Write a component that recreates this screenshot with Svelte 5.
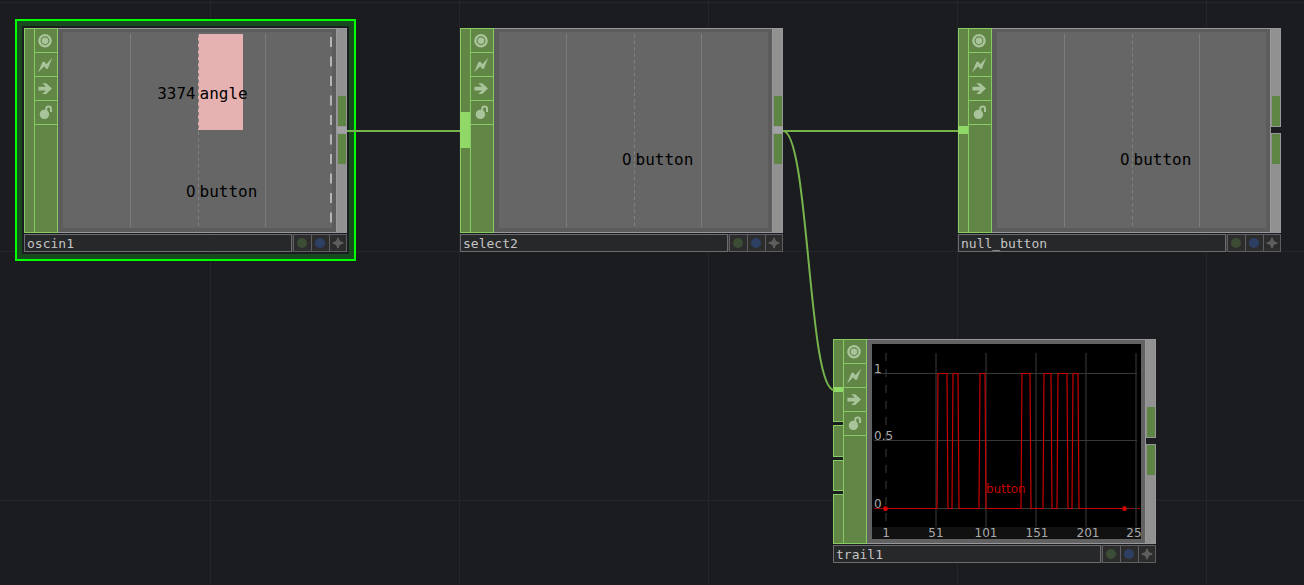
<script>
  const nodes = [
    { name: 'oscin1', x: 24, y: 28, selected: true, inputs: [{ grow: 1 }], joined: true, peak: true,
      channels: [{ value: '3374', label: 'angle', bar: 34 }, { value: '0', label: 'button', bar: 0 }] },
    { name: 'select2', x: 460, y: 28, inputs: [{ grow: 1, link: 'wide' }], joined: true,
      channels: [{ value: '0', label: 'button', bar: 0 }] },
    { name: 'null_button', x: 958, y: 28, inputs: [{ grow: 1, link: 'slim' }], joined: false,
      channels: [{ value: '0', label: 'button', bar: 0 }] },
    { name: 'trail1', x: 833, y: 339, joined: false, chart: true,
      inputs: [{ grow: 81, link: 'low' }, { grow: 30 }, { grow: 29 }, { grow: 48 }] }
  ];

  const wires = [
    'M347 131H460',
    'M783 131H958',
    'M783 131C809 131 808 390 834 390'
  ];

  const flags = ['Viewer', 'Clone immune', 'Bypass', 'Lock'];

  // Rising and falling edges of the button signal, in chart units.
  const pulses = [[65, 76], [80, 87], [107, 114], [149, 159], [171, 180], [185, 196], [200, 207]];
  const trace = 'M14 164' + pulses
    .map(([a, b]) => `H${a}L${a + 1} 29H${b - 1}L${b} 164`)
    .join('') + 'H252';
  const ticks = [[14, '1'], [64, '51'], [114, '101'], [165, '151'], [216, '201'], [262, '25']];
  const columns = [14, 64, 114, 164, 214, 264];
  const levels = [[29, '1'], [96, '0.5'], [164, '0']];
</script>

<main class="network">
  <svg class="wires" aria-hidden="true">
    {#each wires as d}<path {d} />{/each}
  </svg>

  {#each nodes as node}
    <section class="node" class:selected={node.selected} style="left:{node.x}px;top:{node.y}px">
      <div class="body">
        <div class="inputs">
          {#each node.inputs as input}
            <div class="input" style="flex-grow:{input.grow}">
              {#if input.link}<i class="link {input.link}"></i>{/if}
            </div>
          {/each}
        </div>

        <div class="flags">
          {#each flags as flag, i}
            <button class="flag" aria-label={flag}>
              <svg viewBox="0 0 22 23" width="22" height="23">
                {#if i === 0}
                  <circle cx="10" cy="11.7" r="5.6" fill="none" stroke="#a9c49b" stroke-width="2.4" />
                  <circle cx="10" cy="11.7" r="3.3" fill="#a9c49b" />
                {:else if i === 1}
                  <path fill="#a9c49b" d="M3 19.4L7.6 8.8H9.6L11.3 11.2L17.2 4.8L12.9 15.8H11L9.2 13.3Z" />
                {:else if i === 2}
                  <path fill="#a9c49b" d="M3.4 9.7H11L7.2 6.2H11.2L17 11.6L11.2 17H7.2L11 13.5H3.4Z" />
                {:else}
                  <circle cx="9.4" cy="13.4" r="4.7" fill="#a9c49b" />
                  <path fill="none" stroke="#a9c49b" stroke-width="2" d="M11.2 11V7.8Q11.2 5.4 13.6 5.4Q16 5.4 16 7.8V11" />
                {/if}
              </svg>
            </button>
          {/each}
        </div>

        <div class="frame" class:plot={node.chart}>
          {#if node.chart}
            <svg class="chart" viewBox="0 0 269 195" preserveAspectRatio="xMinYMin meet">
              <rect width="269" height="195" fill="#000" />
              <rect y="183" width="269" height="12" fill="#111" />
              {#each columns as x, i}
                <path d="M{x} 9V183" stroke="#1e1e1e" stroke-width="2" stroke-dasharray={i ? 'none' : '8 8'} />
              {/each}
              {#each ticks as [x, label]}
                <text class="tick" {x} y="193">{label}</text>
              {/each}
              {#each levels as [y, label]}
                <path d="M2 {y + 0.5}H265" stroke="#383838" />
                <text class="level" x="2" y={y}>{label}</text>
              {/each}
              <path d={trace} transform="translate(0 .5)" fill="none" stroke="#c80000" stroke-width="1.2" />
              <path d="M2 164.5H12M257 164.5H261M265 164.5H268" stroke="#a00000" />
              <circle cx="13.5" cy="164.7" r="2.4" fill="#d80000" />
              <circle cx="252.5" cy="164.7" r="2.4" fill="#d80000" />
              <text class="series" x="114" y="149">button</text>
            </svg>
          {:else}
            <div class="viewer">
              {#each node.channels as channel}
                <div class="channel">
                  {#if channel.bar}<i class="bar" style="width:{channel.bar / 2}%"></i>{/if}
                  <span class="value">{channel.value}</span>
                  <span class="label">{channel.label}</span>
                </div>
              {/each}
              <svg class="guides" viewBox="0 0 269 196" preserveAspectRatio="none" aria-hidden="true">
                <path d="M67.5 2V195M202.5 2V195" stroke="#7c7c7c" />
                <path d="M135.5 2V195" stroke="#808080" stroke-dasharray="3.5 3" />
                {#if node.peak}<path d="M268 5V196" stroke="#b4b4b4" stroke-width="2" stroke-dasharray="10 9.5" />{/if}
              </svg>
            </div>
          {/if}
        </div>

        <div class="outputs" class:joined={node.joined}>
          <div class="output upper"><i></i></div>
          <div class="output lower"><i></i></div>
        </div>
      </div>

      <footer class="title">
        <span class="name">{node.name}</span>
        <div class="toggles">
          <button aria-label="Display"><i class="dot green"></i></button>
          <button aria-label="Render"><i class="dot blue"></i></button>
          <button aria-label="Activate viewer">
            <svg viewBox="0 0 12 12" width="12" height="12">
              <path fill="#5d5d5d" d="M6 0L8 4L12 6L8 8L6 12L4 8L0 6L4 4Z" />
              <path stroke="#5d5d5d" stroke-width="2" d="M6 1V11M1 6H11" />
            </svg>
          </button>
        </div>
      </footer>
    </section>
  {/each}
</main>

<style>
  :global(body) {
    margin: 0;
    background: #1b1c20;
  }

  .network {
    position: relative;
    min-height: 100vh;
    overflow: hidden;
    background-color: #1b1c20;
    background-image:
      linear-gradient(90deg, #25262b 1px, transparent 1px),
      linear-gradient(#25262b 1px, transparent 1px);
    background-size: 249px 249px;
    background-position: 210px 2px;
    font-family: "DejaVu Sans Mono", monospace;
  }

  .network * {
    box-sizing: border-box;
  }

  .wires {
    position: absolute;
    inset: 0;
    width: 100%;
    height: 100%;
    z-index: 1;
    pointer-events: none;
  }

  .wires path {
    fill: none;
    stroke: #76b44b;
    stroke-width: 2;
  }

  .node {
    position: absolute;
    width: 323px;
  }

  .selected::before {
    content: "";
    position: absolute;
    inset: -9px;
    border: 2px solid #00ff00;
    box-shadow: inset 0 0 0 5px #174a1c;
  }

  .body {
    position: relative;
    display: grid;
    grid-template-columns: 10px 24px 1fr 11px;
    height: 205px;
  }

  .inputs {
    display: flex;
    flex-direction: column;
    gap: 3px;
  }

  .input {
    position: relative;
    flex-basis: 0;
    background: #618646;
    border: 1px solid #86cc62;
    border-right: 0;
  }

  .link {
    position: absolute;
    left: -1px;
    right: 0;
    background: #90d868;
  }

  .wide {
    top: 83px;
    height: 36px;
  }

  .slim {
    top: 97px;
    height: 8px;
  }

  .low {
    top: 47px;
    height: 5px;
  }

  .flags {
    background: #618646;
    border: 1px solid #86cc62;
  }

  .flag {
    display: block;
    width: 100%;
    height: 24px;
    padding: 0;
    border: 0;
    border-bottom: 1px solid #86cc62;
    background: none;
  }

  .flag svg {
    display: block;
  }

  .frame {
    padding: 3px 4px 4px 5px;
    background: #5c5c5c;
    border: solid #98989c;
    border-width: 1px 0;
  }

  .plot {
    padding-top: 4px;
    background: #626262;
  }

  .viewer {
    position: relative;
    display: flex;
    flex-direction: column;
    height: 100%;
    background: #666;
  }

  .channel {
    position: relative;
    flex: 1;
    display: grid;
    grid-template-columns: 1fr 1fr;
    grid-template-rows: 2fr auto 1fr;
    font-size: 16px;
    line-height: 18px;
    color: #000;
  }

  .bar {
    position: absolute;
    top: 2px;
    bottom: 0;
    left: 50%;
    background: #e5b1b1;
  }

  .value {
    position: relative;
    grid-row: 2;
    text-align: right;
    padding-right: 2px;
    font-family: "DejaVu Sans", sans-serif;
    font-size: 15px;
  }

  .label {
    position: relative;
    grid-row: 2;
    padding-left: 2px;
  }

  .guides {
    position: absolute;
    inset: 0;
    width: 100%;
    height: 100%;
  }

  .chart {
    display: block;
    width: 100%;
    font-family: "DejaVu Sans", sans-serif;
    font-size: 12px;
  }

  .tick {
    text-anchor: middle;
    fill: #aaa;
  }

  .level {
    fill: #aaa;
  }

  .series {
    fill: #c00000;
  }

  .outputs {
    display: flex;
    flex-direction: column;
    gap: 6px;
    border-left: 1px solid #98989c;
  }

  .output {
    display: flex;
    padding-left: 1px;
    background: #919191;
    border: 1px solid #98989c;
    border-left: 0;
  }

  .output i {
    width: 100%;
    height: 30px;
    background: #5f8545;
  }

  .upper {
    flex: 0 0 99px;
    align-items: flex-end;
  }

  .lower {
    flex: 1;
    align-items: flex-start;
  }

  .joined {
    background: #a1a1a6;
  }

  .title {
    position: relative;
    display: flex;
    gap: 1px;
    height: 18px;
    margin-top: 1px;
    background: #3c3c40;
  }

  .name {
    flex: 1;
    padding-left: 2px;
    border: 1px solid #6c6c70;
    background: #27282a;
    color: #c4c4c4;
    font-size: 13px;
    line-height: 17px;
  }

  .toggles {
    display: grid;
    grid-template-columns: repeat(3, 18px);
  }

  .toggles button {
    display: flex;
    align-items: center;
    justify-content: center;
    padding: 0;
    border: 1px solid #5e5e62;
    border-right-width: 0;
    background: #2c2c2d;
  }

  .toggles button:last-child {
    border-right-width: 1px;
  }

  .toggles svg {
    flex: none;
  }

  .dot {
    width: 10px;
    height: 10px;
    margin-right: 1px;
    border-radius: 50%;
  }

  .green {
    background: #3d4c35;
  }

  .blue {
    background: #2d4064;
  }
</style>
